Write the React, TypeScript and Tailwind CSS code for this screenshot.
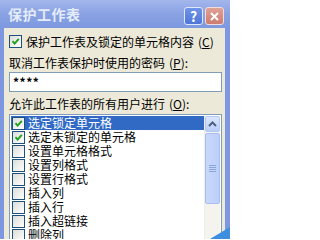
import React from 'react';

const FONT = { fontFamily: '"Noto Sans CJK SC", "Noto Sans", sans-serif' };

const ITEMS = [
  { label: '选定锁定单元格', checked: true },
  { label: '选定未锁定的单元格', checked: true },
  { label: '设置单元格格式', checked: false },
  { label: '设置列格式', checked: false },
  { label: '设置行格式', checked: false },
  { label: '插入列', checked: false },
  { label: '插入行', checked: false },
  { label: '插入超链接', checked: false },
  { label: '删除列', checked: false },
];

function Check({ checked }: { checked: boolean }) {
  return (
    <span className="flex-none w-[13px] h-[13px] border border-[#1c5180] bg-gradient-to-br from-[#dcdcd7] to-white flex items-center justify-center">
      {checked && (
        <svg width="11" height="11" viewBox="0 0 11 11">
          <path d="M2.5 5.2 L4.6 7.6 L8.8 2.8" fill="none" stroke="#21a121" strokeWidth="2" />
        </svg>
      )}
    </span>
  );
}

function Mn({ ch }: { ch: string }) {
  return (
    <span className="ml-[4px]">
      (<span className="underline underline-offset-[1px]">{ch}</span>)
    </span>
  );
}

export default function App() {
  return (
    <div
      className="relative w-[230px] h-[239px] overflow-hidden flex flex-col bg-[#7d98e0] text-[12px] leading-[14px] text-black"
      style={FONT}
    >
      {/* title bar */}
      <div className="h-[28px] flex-none flex items-center pl-[8px] pr-[6px] bg-gradient-to-b from-[#a3b6ec] via-[#8aa2e3] to-[#7d98e0]">
        <span className="text-[14px] font-bold text-[#e4ebf9] tracking-[0.5px]">保护工作表</span>
        <div className="ml-auto flex gap-[2px] pt-[4px]">
          <span className="w-[19px] h-[18px] rounded-[3px] border border-[#dfe7fa] bg-gradient-to-b from-[#6f94e8] to-[#4e76d8] text-white font-bold text-[14px] leading-[16px] flex items-center justify-center">
            ?
          </span>
          <span className="w-[19px] h-[18px] rounded-[3px] border border-[#f0dcd8] bg-gradient-to-b from-[#e0a196] to-[#cc7c70] flex items-center justify-center">
            <svg width="11" height="11" viewBox="0 0 11 11">
              <path d="M2 2 L9 9 M9 2 L2 9" stroke="white" strokeWidth="2" />
            </svg>
          </span>
        </div>
      </div>

      {/* body */}
      <div className="flex-1 ml-[4px] mr-[5px] bg-[#ece9d8] pl-[5px] pr-[3px] pt-[7px] flex flex-col">
        <label className="flex items-center gap-[4px] h-[13px]">
          <Check checked />
          <span>
            保护工作表及锁定的单元格内容
            <Mn ch="C" />
          </span>
        </label>

        <div className="mt-[8px] h-[14px]">
          取消工作表保护时使用的密码
          <Mn ch="P" />:
        </div>

        <div className="mt-[2px] h-[20px] bg-white border border-[#7f9db9] flex items-center pl-[3px] text-[12px] font-bold tracking-[0.5px]">
          ****
        </div>

        <div className="mt-[5px] h-[14px]">
          允许此工作表的所有用户进行
          <Mn ch="O" />:
        </div>

        <div className="mt-[3px] h-[140px] flex-none bg-white border border-[#7f9db9] p-px flex">
          <div className="flex-1 flex flex-col">
            {ITEMS.map((it, i) => (
              <div
                key={it.label}
                className={
                  'h-[14px] flex-none flex items-center gap-[3px] pl-px ' +
                  (i === 0 ? 'bg-[#316ac5] text-white' : '')
                }
              >
                <Check checked={it.checked} />
                <span>{it.label}</span>
              </div>
            ))}
          </div>

          {/* scrollbar */}
          <div className="w-[16px] flex-none bg-[#f4f3ee] border-l border-[#eeede5] flex flex-col gap-px">
            <div className="h-[16px] rounded-[2px] border border-[#b4c8f6] bg-gradient-to-b from-[#dde8fe] to-[#b9cdf8] flex items-center justify-center">
              <svg width="9" height="6" viewBox="0 0 9 6">
                <path d="M1 5 L4.5 1.5 L8 5" fill="none" stroke="#4d6185" strokeWidth="2" />
              </svg>
            </div>
            <div className="h-[71px] rounded-[2px] border border-[#a9bff0] bg-gradient-to-r from-[#c9d8fc] to-[#bccffa] flex items-center justify-center">
              <div className="flex flex-col gap-px">
                <span className="w-[7px] h-px bg-[#8ea5d9]" />
                <span className="w-[7px] h-px bg-[#8ea5d9]" />
                <span className="w-[7px] h-px bg-[#8ea5d9]" />
                <span className="w-[7px] h-px bg-[#8ea5d9]" />
              </div>
            </div>
          </div>
        </div>
      </div>

      <svg className="absolute right-0 bottom-0" width="20" height="12" viewBox="0 0 20 12">
        <path d="M0 12 L20 0 L20 12 Z" fill="#3b8fde" />
      </svg>
    </div>
  );
}
